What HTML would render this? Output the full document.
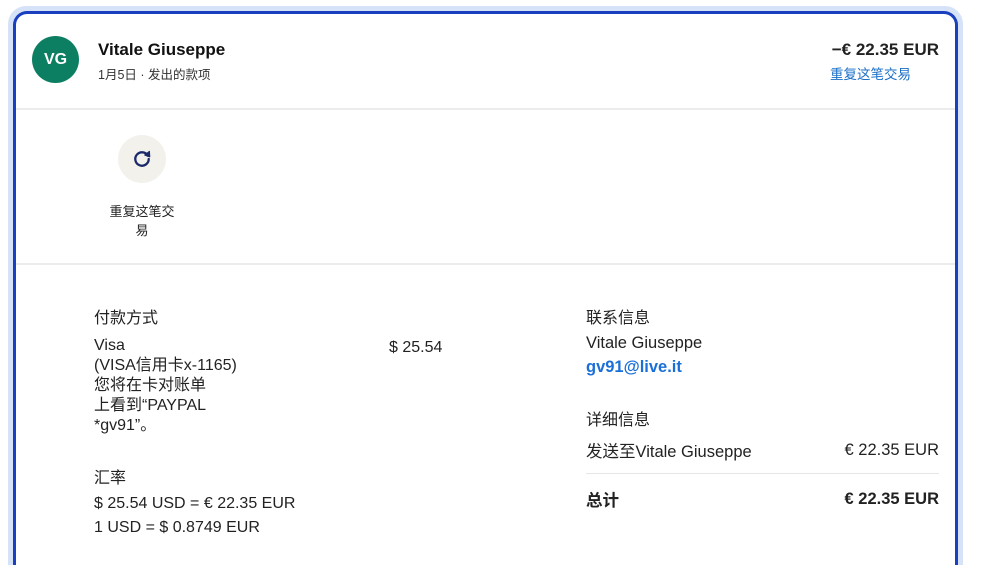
<!DOCTYPE html>
<html><head><meta charset="utf-8"><style>
*{margin:0;padding:0;box-sizing:border-box}
html,body{width:981px;height:565px;overflow:hidden}
body{position:relative;background:#fff;font-family:"Liberation Sans","Noto Sans CJK SC",sans-serif;color:#222}
.halo{position:absolute;left:8px;top:6px;width:955px;height:559px;border-radius:18px 18px 0 0;background:#d6e2f7}
.card{position:absolute;left:13px;top:11px;width:945px;height:554px;border:3px solid #1a3fbf;border-bottom:none;border-radius:14px 14px 0 0;background:#fff}
.abs{position:absolute;white-space:nowrap}
.hr{position:absolute;left:0;right:0;height:2px;background:#ececec}
</style></head><body>
<div class="halo"></div>
<div class="card">
 <div class="abs" style="left:16px;top:22px;width:47px;height:47px;border-radius:50%;background:#0c7f63;color:#fff;font-weight:bold;font-size:16px;line-height:47px;text-align:center">VG</div>
 <div class="abs" style="left:82px;top:26px;font-size:17px;font-weight:bold;color:#111">Vitale Giuseppe</div>
 <div class="abs" style="left:82px;top:50px;font-size:12.5px;color:#333">1月5日 · 发出的款项</div>
 <div class="abs" style="right:16px;top:26px;font-size:17px;font-weight:bold;color:#222">−€ 22.35 EUR</div>
 <div class="abs" style="right:44px;top:49px;font-size:13.5px;color:#1a6fc8">重复这笔交易</div>
 <div class="hr" style="top:94px"></div>
 <div class="abs" style="left:102px;top:121px;width:48px;height:48px;border-radius:50%;background:#f2f1ec"></div>
 <svg class="abs" style="left:115px;top:134px" width="22" height="22" viewBox="0 0 18 18"><path d="M13.76 6.25A5.5 5.5 0 1 0 14.5 9" fill="none" stroke="#1c2a6b" stroke-width="1.9" stroke-linecap="round"/><path d="M11.3 5.8L15 2.8 15.3 7.2z" fill="#1c2a6b" stroke="#1c2a6b" stroke-width="1" stroke-linejoin="round"/></svg>
 <div class="abs" style="left:88px;top:188px;width:76px;font-size:13px;line-height:19px;text-align:center;white-space:normal">重复这笔交易</div>
 <div class="hr" style="top:249px"></div>
 <div class="abs" style="left:78px;top:290px;font-size:16px">付款方式</div>
 <div class="abs" style="left:78px;top:322px;font-size:16px;line-height:20px">Visa<br>(VISA信用卡x-1165)<br>您将在卡对账单<br>上看到“PAYPAL<br>*gv91”。</div>
 <div class="abs" style="left:373px;top:325px;font-size:16px">$ 25.54</div>
 <div class="abs" style="left:78px;top:450px;font-size:16px">汇率</div>
 <div class="abs" style="left:78px;top:478px;font-size:16px;line-height:24px">$ 25.54 USD = € 22.35 EUR<br>1 USD = $ 0.8749 EUR</div>
 <div class="abs" style="left:570px;top:290px;font-size:16px">联系信息</div>
 <div class="abs" style="left:570px;top:320px;font-size:16.5px">Vitale Giuseppe</div>
 <div class="abs" style="left:570px;top:344px;font-size:16.5px;font-weight:bold;color:#1a6fd8">gv91@live.it</div>
 <div class="abs" style="left:570px;top:392px;font-size:16px">详细信息</div>
 <div class="abs" style="left:570px;top:424px;font-size:16.5px">发送至Vitale Giuseppe</div>
 <div class="abs" style="right:16px;top:427px;font-size:16.5px">€ 22.35 EUR</div>
 <div class="abs" style="left:570px;right:16px;top:459px;height:1px;background:#e6e6e6"></div>
 <div class="abs" style="left:570px;top:473px;font-size:16.5px;font-weight:bold">总计</div>
 <div class="abs" style="right:16px;top:476px;font-size:16.5px;font-weight:bold">€ 22.35 EUR</div>
</div>
</body></html>
